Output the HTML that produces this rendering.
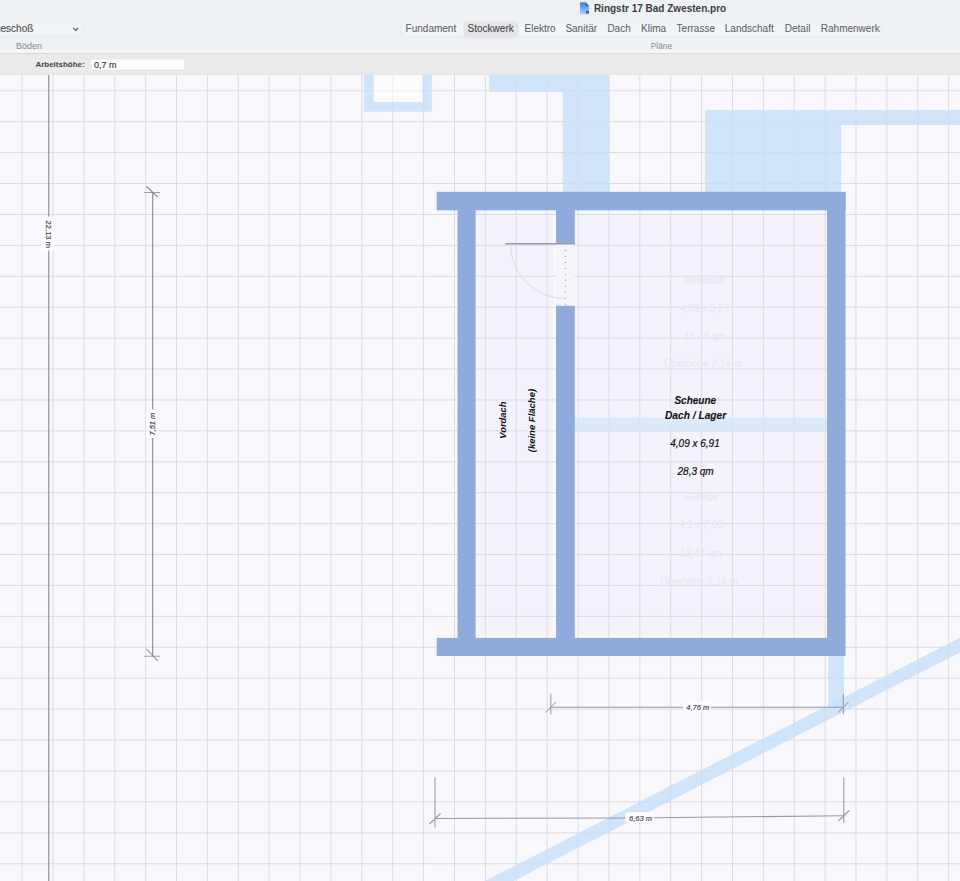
<!DOCTYPE html>
<html><head><meta charset="utf-8">
<style>
html,body{margin:0;padding:0;width:960px;height:881px;overflow:hidden;background:#f8f8fd;}
svg{position:absolute;left:0;top:0;display:block;}
text{font-family:"Liberation Sans",sans-serif;}
</style></head><body>
<svg width="960" height="881" viewBox="0 0 960 881">
<defs>
<linearGradient id="doc" x1="0" y1="0" x2="0" y2="1">
<stop offset="0" stop-color="#3f7ff0"/><stop offset="0.45" stop-color="#6aaaf5"/><stop offset="1" stop-color="#a9d6ee"/>
</linearGradient>
</defs>
<rect x="0" y="0" width="960" height="49.5" fill="#eef2f5"/>
<rect x="0" y="49.5" width="960" height="3.5" fill="#f2f6f8"/>
<rect x="0" y="53" width="960" height="1" fill="#dadbdc"/>
<rect x="0" y="54" width="960" height="20.5" fill="#eaeaea"/>
<rect x="0" y="74.5" width="960" height="1" fill="#dfdfe3"/>
<path d="M580 2.3h5.6l3.4 3.6v8.6h-9z" fill="url(#doc)"/>
<path d="M585.6 2.3v3.6h3.4z" fill="#2d63c0"/>
<rect x="586" y="11" width="3" height="2.4" fill="#3d5c72"/>
<text x="593.9" y="12.4" font-size="10" font-weight="bold" fill="#3d3d3d">Ringstr 17 Bad Zwesten.pro</text>
<rect x="-4" y="22.8" width="87.3" height="13.6" rx="3" fill="#f1f5f7" stroke="#e3e7ea" stroke-width="0.7"/>
<text x="33.3" y="31.9" font-size="10" fill="#505050" stroke="#505050" stroke-width="0.15" text-anchor="end">Erdgeschoß</text>
<path d="M73.3 28l2.4 2.5 2.4-2.5" fill="none" stroke="#555" stroke-width="1.1"/>
<text x="16.1" y="48.9" font-size="9" fill="#8c8c8c">Böden</text>
<rect x="401.3" y="22.5" width="480.3" height="14.2" rx="3" fill="#f1f5f7" stroke="#e3e7ea" stroke-width="0.7"/>
<rect x="463.5" y="21.4" width="55" height="16.3" rx="3" fill="#e3e5e7"/>
<g font-size="10" fill="#606060" stroke="#606060" stroke-width="0.05">
<text x="405.6" y="32">Fundament</text>
<text x="467.6" y="32" fill="#3f3f3f" stroke="#3f3f3f">Stockwerk</text>
<text x="524.5" y="32">Elektro</text>
<text x="565.4" y="32">Sanitär</text>
<text x="607.4" y="32">Dach</text>
<text x="641.1" y="32">Klima</text>
<text x="676.6" y="32">Terrasse</text>
<text x="724.8" y="32">Landschaft</text>
<text x="784.8" y="32">Detail</text>
<text x="820.8" y="32">Rahmenwerk</text>
</g>
<text x="650.8" y="48.6" font-size="8.3" fill="#8c8c8c">Pläne</text>
<text x="35.4" y="67.1" font-size="8" font-weight="bold" fill="#444">Arbeitshöhe:</text>
<rect x="91.5" y="59.7" width="92.3" height="10.5" fill="#ffffff"/>
<rect x="91.5" y="69.7" width="92.3" height="0.8" fill="#dcdcdc"/>
<text x="94" y="68.4" font-size="9" fill="#2e2e2e" stroke="#2e2e2e" stroke-width="0.12">0,7 m</text>
</svg>
<svg width="960" height="806" viewBox="0 75 960 806" style="top:75px">
<rect x="0" y="75" width="960" height="806" fill="#f8f8fd"/>
<rect x="475" y="210" width="352" height="428" fill="#f4f3fc"/>
<g fill="none" stroke="#fbfbff" stroke-width="3" stroke-opacity="0.6"><rect x="477.1" y="211.8" width="77.4" height="424.6"/><rect x="576.3" y="211.8" width="249.2" height="424.6"/></g>
<path d="M22.08 75V881M52.97 75V881M83.85 75V881M114.74 75V881M145.62 75V881M176.51 75V881M207.40 75V881M238.28 75V881M269.17 75V881M300.05 75V881M330.94 75V881M361.83 75V881M392.71 75V881M423.60 75V881M454.48 75V881M485.37 75V881M516.26 75V881M547.14 75V881M578.03 75V881M608.91 75V881M639.80 75V881M670.69 75V881M701.57 75V881M732.46 75V881M763.34 75V881M794.23 75V881M825.12 75V881M856.00 75V881M886.89 75V881M917.77 75V881M948.66 75V881M0 90.75H960M0 121.67H960M0 152.59H960M0 183.51H960M0 214.43H960M0 245.35H960M0 276.27H960M0 307.19H960M0 338.11H960M0 369.03H960M0 399.95H960M0 430.87H960M0 461.79H960M0 492.71H960M0 523.63H960M0 554.55H960M0 585.47H960M0 616.39H960M0 647.31H960M0 678.23H960M0 709.15H960M0 740.07H960M0 770.99H960M0 801.91H960M0 832.83H960M0 863.75H960" stroke="#dbdbe4" stroke-width="1" fill="none"/>
<g fill="#c5dff9" fill-opacity="0.8">
<path d="M363.9 75H431.8V111.7H363.9zM373.7 75V101.9H422.5V75z" fill-rule="evenodd"/>
<path d="M489.3 75H609.3V192H562.7V91.7H489.3z"/>
<path d="M705 110H960V125H841V192H705z"/>
<path d="M828.3 656H844V707H828.3z"/>
<path d="M485 880.9L960 637.8V652.5L513.5 881z"/>
</g>
<rect x="575" y="417.8" width="252" height="13.8" fill="#d3e7fb" fill-opacity="0.75"/>
<rect x="373.7" y="75" width="48.8" height="26.9" fill="#ffffff" fill-opacity="0.55"/>
<g fill="#8eabdb">
<rect x="436.7" y="191.8" width="409.1" height="18.5"/>
<rect x="436.7" y="637.9" width="408.8" height="18.1"/>
<rect x="457.5" y="210" width="18.1" height="428"/>
<rect x="556" y="210" width="18.8" height="33.8"/>
<rect x="556" y="305.5" width="18.8" height="333"/>
<rect x="827" y="210" width="18.5" height="428"/>
</g>
<rect x="556" y="244.3" width="18.8" height="61.2" fill="#f5f5fc"/>
<path d="M565.5 250V305" stroke="#999" stroke-width="1.1" stroke-dasharray="1 4.96" fill="none"/>
<path d="M505.5 243.8H575" stroke="#999" stroke-width="1.6" fill="none"/>
<path d="M510.5 244.4A55 54.2 0 0 0 565.5 298.6" stroke="#d4d4dc" stroke-width="0.8" fill="none"/>
<g fill="#fdfdff">
<rect x="41" y="216.4" width="14" height="34" rx="3"/>
<rect x="146" y="409.6" width="13" height="28.4" rx="3"/>
<rect x="683" y="701.5" width="28" height="10.5" rx="3"/>
<rect x="625.2" y="812.3" width="28.6" height="10.5" rx="3"/>
</g>
<g stroke="#939bab" fill="none" stroke-width="1.05">
<path d="M48.8 75V216.4M48.8 250.4V881" stroke="#7b8599"/>
<path d="M152.7 192.4V409.6M152.7 438V656.2" stroke="#7b8599"/>
<path d="M144.2 192.4H160.1M144.2 656.2H160.1" stroke="#9aa1ae"/><path d="M146.5 186.5L157.8 197.2M146.5 649L157.8 661" stroke="#7b8599"/>
<path d="M550.8 707.3H683M711 707.3H843.3"/>
<path d="M550.8 693.7V714.6M545.5 712.5L556 702M843.3 693.7V714.6M838 712.5L848.5 702"/>
<path d="M435 818.4L625.2 817.9M653.8 817.7L843.8 815.8"/>
<path d="M435 777.3V827.5M429.5 824L440.5 813.5M843.8 777.3V823M838.3 821L849.3 810.5"/>
</g>
<g font-size="7.5" font-style="italic" fill="#3a4150" stroke="#3a4150" stroke-width="0.15" text-anchor="middle">
<text x="697.8" y="710.2">4,76 m</text>
<text x="640.5" y="820.8">6,63 m</text>
<text transform="translate(155.2,424.1) rotate(-90)">7,51 m</text>
</g>
<text transform="translate(46,234.3) rotate(90)" font-size="7.6" fill="#3a4150" stroke="#3a4150" stroke-width="0.15" text-anchor="middle">22,13 m</text>
<g text-anchor="middle" font-style="italic" fill="#111" stroke="#111">
<text x="695.3" y="404.4" font-size="10" font-weight="bold" stroke-width="0.1">Scheune</text>
<text x="695.6" y="418.5" font-size="10.2" font-weight="bold" stroke-width="0.1">Dach / Lager</text>
<text x="695" y="446.9" font-size="10" stroke-width="0.2">4,09 x 6,91</text>
<text x="695.6" y="475.2" font-size="10" stroke-width="0.2">28,3 qm</text>
<text transform="translate(506,420.1) rotate(-90)" font-size="9.4" font-weight="bold" stroke-width="0">Vordach</text>
<text transform="translate(535.2,420.6) rotate(-90)" font-size="9.5" font-weight="bold" stroke-width="0">(keine Fläche)</text>
</g>
<g text-anchor="middle" font-size="10" fill="#e5e5ef">
<text x="704.5" y="283.8">Werkstatt</text>
<text x="704.8" y="311.9">4,09 x 3,57</text>
<text x="704.8" y="340">14,44 qm</text>
<text x="703" y="367.3">Oberhöhe 2,14 m</text>
<text x="701.3" y="500.3">Garage</text>
<text x="701" y="527.7">4,1 x 7,00</text>
<text x="701" y="557.3">13,44 qm</text>
<text x="699" y="584.7">Oberhöhe 2,14 m</text>
</g>
</svg>
</body></html>
